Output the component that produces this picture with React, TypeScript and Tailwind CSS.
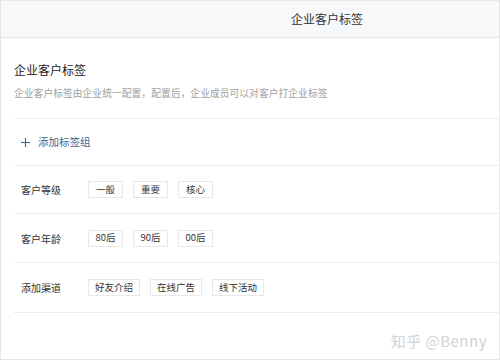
import React from "react";

const groups: { name: string; tags: string[]; h: string }[] = [
  { name: "客户等级", tags: ["一般", "重要", "核心"], h: "h-[48px]" },
  { name: "客户年龄", tags: ["80后", "90后", "00后"], h: "h-[49px]" },
  { name: "添加渠道", tags: ["好友介绍", "在线广告", "线下活动"], h: "h-[50px]" },
];

const TagRow = ({ name, tags, h }: { name: string; tags: string[]; h: string }) => (
  <div className={`flex items-center ${h} border-b border-[#ececec] pl-[7px]`}>
    <div className="w-[67px] text-[10px] text-[#333]">{name}</div>
    <div className="flex gap-[10px]">
      {tags.map((t) => (
        <span
          key={t}
          className="h-[17px] min-w-[35px] flex items-center justify-center px-[6px] border border-[#e8e8e8] text-[9.5px] text-[#333] leading-none"
        >
          {t}
        </span>
      ))}
    </div>
  </div>
);

export default function App() {
  return (
    <div
      className="w-[500px] h-[360px] bg-white border border-[#e6e6e6] flex flex-col overflow-hidden"
      style={{ fontFamily: '"Noto Sans CJK SC", "Noto Sans", sans-serif' }}
    >
      <div className="h-[37px] shrink-0 bg-[#f7f8fa] border-b border-[#e6e6e6] flex items-center pl-[290px]">
        <span className="text-[12px] text-[#333]">企业客户标签</span>
      </div>

      <div className="pl-[13px] flex flex-col">
        <div className="pt-[24px] pb-[18px] border-b border-[#ececec]">
          <div className="text-[12px] text-[#222] leading-[16px]">企业客户标签</div>
          <div className="mt-[8px] text-[9.8px] text-[#a0a0a0] leading-[14px]">
            企业客户标签由企业统一配置，配置后，企业成员可以对客户打企业标签
          </div>
        </div>

        <div className="h-[47px] flex items-center pl-[7px] gap-[8px] border-b border-[#ececec] text-[#3e6590]">
          <svg width="9" height="9" viewBox="0 0 9 9" className="shrink-0">
            <path d="M4.5 0V9M0 4.5H9" stroke="#3e6590" strokeWidth="1.1" fill="none" />
          </svg>
          <span className="text-[10.5px]">添加标签组</span>
        </div>

        {groups.map((g) => (
          <TagRow key={g.name} name={g.name} tags={g.tags} h={g.h} />
        ))}

        <div className="flex justify-end pr-[12px] pt-[17px]">
          <span className="text-[15px] text-[#d2d2d2] tracking-[0.5px]">知乎 @Benny</span>
        </div>
      </div>
    </div>
  );
}
